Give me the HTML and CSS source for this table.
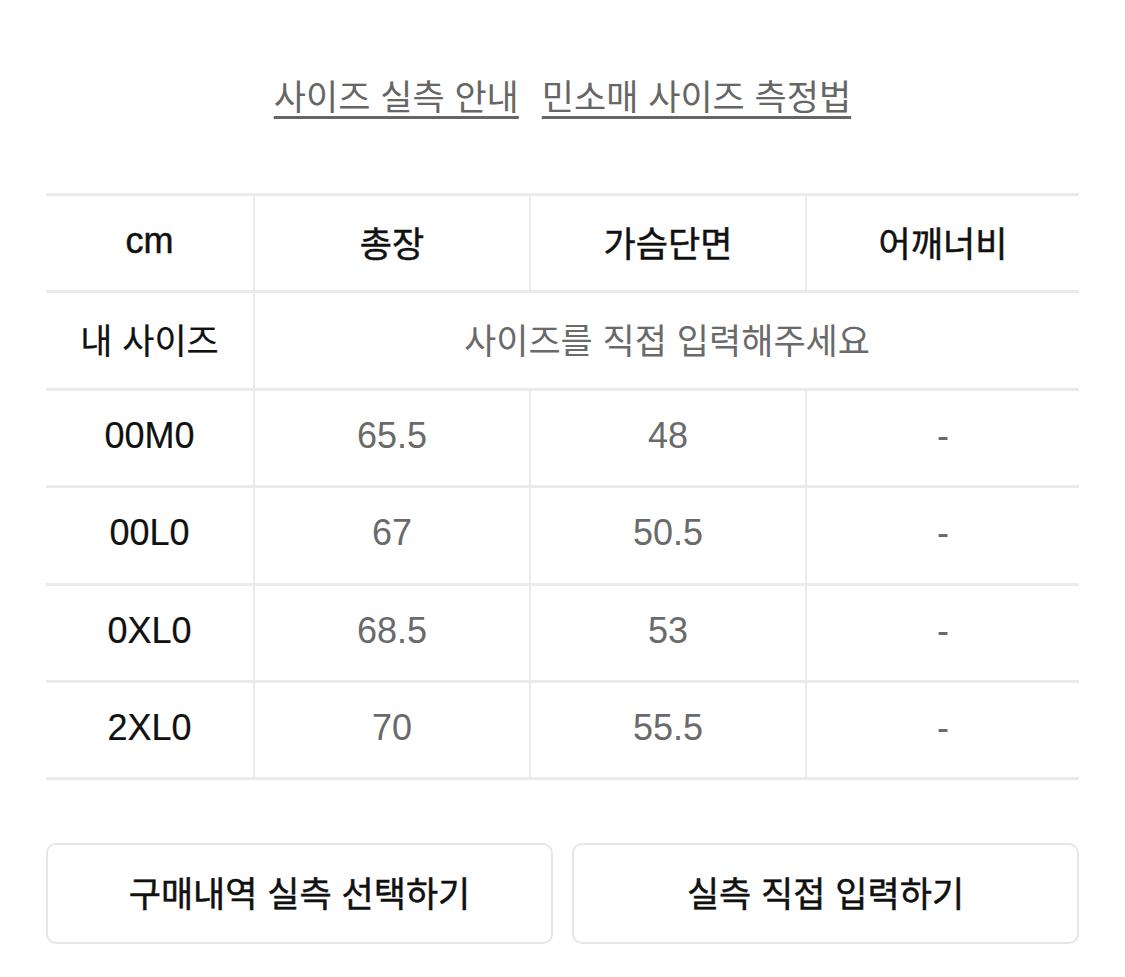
FILE: index.html
```html
<!DOCTYPE html>
<html lang="ko">
<head>
<meta charset="utf-8">
<title>사이즈 실측</title>
<link rel="stylesheet" href="styles.css">
</head>
<body>
<div class="page">
  <nav class="links">
    <a class="link" href="#">사이즈 실측 안내</a>
    <a class="link" href="#">민소매 사이즈 측정법</a>
  </nav>

  <div class="size-table">
    <div class="cell head latin">cm</div>
    <div class="cell head ko sep">총장</div>
    <div class="cell head ko sep">가슴단면</div>
    <div class="cell head ko sep">어깨너비</div>

    <div class="cell label ko">내 사이즈</div>
    <div class="cell hint ko sep span3">사이즈를 직접 입력해주세요</div>

    <div class="cell label latin">00M0</div>
    <div class="cell val sep">65.5</div>
    <div class="cell val sep">48</div>
    <div class="cell val sep">-</div>

    <div class="cell label latin">00L0</div>
    <div class="cell val sep">67</div>
    <div class="cell val sep">50.5</div>
    <div class="cell val sep">-</div>

    <div class="cell label latin">0XL0</div>
    <div class="cell val sep">68.5</div>
    <div class="cell val sep">53</div>
    <div class="cell val sep">-</div>

    <div class="cell label latin">2XL0</div>
    <div class="cell val sep">70</div>
    <div class="cell val sep">55.5</div>
    <div class="cell val sep">-</div>
  </div>

  <div class="actions">
    <button class="btn" type="button">구매내역 실측 선택하기</button>
    <button class="btn" type="button">실측 직접 입력하기</button>
  </div>
</div>
</body>
</html>
```

FILE: styles.css
```css
* { box-sizing: border-box; }

html, body {
  margin: 0;
  padding: 0;
  background: #ffffff;
}

body {
  font-family: "Liberation Sans", "Noto Sans CJK KR", sans-serif;
  color: #111111;
}

.page {
  width: 1033px;
  margin: 0 46px;
  padding-top: 72px;
}

.links {
  display: flex;
  justify-content: center;
  gap: 23px;
  height: 121px;
}

.link {
  font-family: "Noto Sans CJK KR", "Liberation Sans", sans-serif;
  font-size: 35px;
  line-height: 46px;
  color: #666666;
  text-decoration: underline;
  text-decoration-thickness: 3px;
  text-underline-offset: 6px;
  text-decoration-color: #666666;
  height: 46px;
}

.size-table {
  display: grid;
  grid-template-columns: 207px 276px 276px 274px;
  grid-auto-rows: 97.4px;
  border-bottom: 3px solid #ebebeb;
}

.cell {
  display: flex;
  align-items: center;
  justify-content: center;
  border-top: 3px solid #ebebeb;
  padding-bottom: 4px;
}

.sep { border-left: 2px solid #ebebeb; }

.span3 { grid-column: span 3; }

.ko {
  font-family: "Noto Sans CJK KR", "Liberation Sans", sans-serif;
  font-size: 35px;
}

.latin {
  font-family: "Liberation Sans", "Noto Sans CJK KR", sans-serif;
  font-size: 36px;
}

.head {
  color: #111111;
  font-weight: 400;
  -webkit-text-stroke: 0.5px #111111;
}

.label { color: #111111; -webkit-text-stroke: 0.2px #111111; }

.hint { color: #6a6a6a; }

.val {
  font-family: "Liberation Sans", "Noto Sans CJK KR", sans-serif;
  font-size: 36px;
  color: #6a6a6a;
}

.actions {
  display: flex;
  gap: 19px;
  margin-top: 63px;
}

.btn {
  flex: 1;
  height: 101px;
  background: #ffffff;
  border: 2px solid #e6e6e6;
  border-radius: 10px;
  font-family: "Noto Sans CJK KR", "Liberation Sans", sans-serif;
  font-size: 35px;
  font-weight: 400;
  -webkit-text-stroke: 0.5px #111111;
  color: #111111;
  padding: 0 0 4px;
}
```
